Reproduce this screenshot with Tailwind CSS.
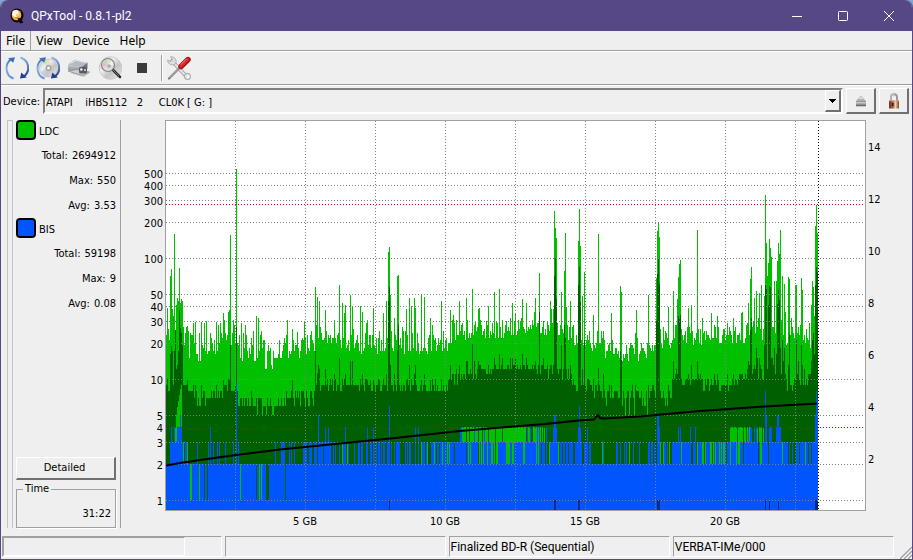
<!DOCTYPE html>
<html lang="en">
<head>
<meta charset="utf-8">
<title>QPxTool - 0.8.1-pl2</title>
<script src="https://cdn.jsdelivr.net/npm/@tailwindcss/browser@4"></script>
</head>
<body class="bg-[#7fa6cf]">
<svg class="absolute h-0 w-0" aria-hidden="true">
  <defs>
    <linearGradient id="blueUp" x1="0" y1="0" x2="0" y2="1"><stop offset="0" stop-color="#3c74bb"/><stop offset=".5" stop-color="#86b2e4"/><stop offset="1" stop-color="#5d8fcf"/></linearGradient>
    <linearGradient id="blueDown" x1="0" y1="0" x2="0" y2="1"><stop offset="0" stop-color="#8fb6e6"/><stop offset="1" stop-color="#213f8c"/></linearGradient>
    <linearGradient id="disc" x1="0" y1="0" x2="1" y2="1"><stop offset="0" stop-color="#b9b9b9"/><stop offset=".35" stop-color="#f1f1f1"/><stop offset=".6" stop-color="#c4c4c4"/><stop offset="1" stop-color="#ececec"/></linearGradient>
    <linearGradient id="metal" x1="0" y1="0" x2="0" y2="1"><stop offset="0" stop-color="#c9ced6"/><stop offset="1" stop-color="#6f757d"/></linearGradient>
    <linearGradient id="brass" x1="0" y1="0" x2="1" y2="0"><stop offset="0" stop-color="#6e2f1a"/><stop offset=".4" stop-color="#a8623f"/><stop offset=".65" stop-color="#f0cfae"/><stop offset="1" stop-color="#7c4026"/></linearGradient>
    <g id="arrows">
      <path d="M8.500 22.500C0 19.500-.5 8 6 3.500" fill="none" stroke="url(#blueUp)" stroke-width="2"/>
      <path d="M3 2.200L10 1.200L8.200 6.800z" fill="#3a70b8"/>
      <path d="M15.500 1.500C24.500 4.500 25.500 15.500 19 20.500" fill="none" stroke="url(#blueDown)" stroke-width="2.200"/>
      <path d="M15 22.500L16.300 16.500L21.800 21.500z" fill="#213f8c"/>
    </g>
  </defs>
</svg>
<div class="flex min-h-screen flex-col overflow-hidden rounded-t-lg border-x border-b border-[#564787] bg-[#efefef] font-['DejaVu_Sans_Condensed','Noto_Sans',sans-serif] text-[11px] text-black">

  <header class="flex h-[31px] items-center bg-[#564787] pl-2 font-['Roboto',sans-serif] text-xs text-white">
    <svg class="mr-1.5 h-4 w-4" viewBox="0 0 16 16">
      <ellipse cx="8" cy="7.500" rx="6.500" ry="7" fill="#0b0704"/>
      <ellipse cx="7.500" cy="7" rx="4.800" ry="5.300" fill="#f6b34a"/>
      <ellipse cx="6.500" cy="5.500" rx="3.200" ry="3.400" fill="#fff6df"/>
      <path d="M5 10L9.500 8.500L11 12z" fill="#e98b2b"/>
      <circle cx="8" cy="7" r=".8" fill="#b98a4a"/>
      <path d="M8.500 10.500L11 10L14.500 14.500L11 15.500z" fill="#0b0704"/>
    </svg>
    <h1>QPxTool - 0.8.1-pl2</h1>
    <div class="ml-auto flex">
      <button class="flex h-[31px] w-[46px] items-center justify-center" aria-label="Minimize"><svg class="h-3 w-3" viewBox="0 0 12 12"><path d="M1 6.500H11" stroke="#fff"/></svg></button>
      <button class="flex h-[31px] w-[46px] items-center justify-center" aria-label="Maximize"><svg class="h-3 w-3" viewBox="0 0 12 12"><rect x="1.500" y="1.500" width="9" height="9" rx=".8" fill="none" stroke="#fff"/></svg></button>
      <button class="flex h-[31px] w-[46px] items-center justify-center" aria-label="Close"><svg class="h-3 w-3" viewBox="0 0 12 12"><path d="M1 1L11 11M11 1L1 11" stroke="#fff"/></svg></button>
    </div>
  </header>

  <nav class="flex h-5 border-b border-[#a0a0a0] font-['Noto_Sans',sans-serif] text-xs leading-[20px]">
    <button class="border-r border-[#a0a0a0] px-[5px]">File</button>
    <button class="px-[5px]">View</button>
    <button class="px-[5px]">Device</button>
    <button class="px-[5px]">Help</button>
  </nav>

  <div class="flex h-[34px] items-center border-b border-t border-b-[#a0a0a0] border-t-white pl-1">
    <button class="flex h-7 w-[31px] items-center" aria-label="Refresh"><svg class="h-6 w-6" viewBox="0 0 24 24"><use href="#arrows"/></svg></button>
    <button class="flex h-7 w-[31px] items-center" aria-label="Reload media"><svg class="h-6 w-6" viewBox="0 0 24 24">
      <circle cx="12.500" cy="12" r="9" fill="url(#disc)" stroke="#b5b5b5" stroke-width=".6"/>
      <path d="M12.500 12L7 5.500L10.500 3.500z" fill="#c9e5b0"/><path d="M12.500 12L11 3.500L14 3.500z" fill="#f0d8b0"/><path d="M12.500 12L5 16L8 19.500z" fill="#c5cfe0"/>
      <circle cx="12.500" cy="12" r="3" fill="#a5a5a5"/><circle cx="12.500" cy="12" r="1.500" fill="#f6f6f6"/>
      <use href="#arrows"/></svg></button>
    <button class="flex h-7 w-[31px] items-center" aria-label="Drive"><svg class="h-6 w-6" viewBox="0 0 24 24">
      <path d="M3 17L17 21L24 16L12 12z" fill="#c6c6c6"/>
      <path d="M1 8.500L8 3.500L20.500 6.500L14 11.500z" fill="#b4bac2"/><path d="M1 8.500L14 11.500V18L1 14z" fill="url(#metal)"/><path d="M14 11.500L20.500 6.500V12.500L14 18z" fill="#70757c"/>
      <path d="M4 7.500L9 4.200L19 6.700" fill="none" stroke="#e6eaee"/>
      <path d="M1 15L10 13.500L22 16L15 19.500z" fill="#cfcfcf" stroke="#8a8a8a" stroke-width=".7"/>
      <rect x="12" y="11" width="8" height="6.500" rx="1.500" fill="#565c64"/><circle cx="14.300" cy="13.500" r="1.300" fill="#eee"/><circle cx="18" cy="14" r="1" fill="#ddd"/></svg></button>
    <button class="flex h-7 w-[31px] items-center" aria-label="Scan"><svg class="h-6 w-6" viewBox="0 0 24 24">
      <circle cx="12.500" cy="12" r="11.300" fill="url(#disc)" stroke="#c2c2c2" stroke-width=".7"/>
      <circle cx="10" cy="9" r="6.500" fill="#dcdcdc" stroke="#848484" stroke-width="1.200"/>
      <path d="M9 9L5 5L9 3.500z" fill="#b6df9e"/><path d="M9 9L4.500 11L4.500 6z" fill="#e6b9c9"/><path d="M10 9L14 5L15.500 9z" fill="#f4f4f4"/>
      <circle cx="11" cy="10" r="1.800" fill="#ababab"/>
      <path d="M15.500 14.500L22 21" stroke="#2b2b2b" stroke-width="2.600" stroke-linecap="round"/><path d="M15 14L21 20" stroke="#8a8a8a" stroke-width=".8"/></svg></button>
    <button class="flex h-7 w-[26px] items-center justify-center" aria-label="Stop"><svg class="h-3 w-3" viewBox="0 0 12 12"><rect x="1" y="1" width="10" height="10" fill="#3b3b3b"/></svg></button>
    <div class="ml-[6px] mr-1 h-[26px] w-0.5 border-l border-r border-l-[#a0a0a0] border-r-white"></div>
    <button class="flex h-7 w-7 items-center" aria-label="Preferences"><svg class="h-6 w-6" viewBox="0 0 24 24">
      <path d="M5 5L20 21" stroke="#8d8d8d" stroke-width="3.600" stroke-linecap="round"/><path d="M5 5L20 21" stroke="#e4e4e4" stroke-width="2.400" stroke-linecap="round"/>
      <path d="M3.500.8A4.800 4.800 0 0 1 8.800 7.500A4.800 4.800 0 0 1 .6 4L4 5.500L5.500 3.500z" fill="#dedede" stroke="#999" stroke-width=".7"/>
      <circle cx="20.500" cy="20.500" r="3.200" fill="#e2e2e2" stroke="#929292" stroke-width=".8"/><circle cx="21" cy="21" r="1.200" fill="#fafafa"/>
      <path d="M2 22.500L12.500 12" stroke="#777" stroke-width="2.200" stroke-linecap="round"/><path d="M2.500 22L12.500 12" stroke="#cfcfcf" stroke-width=".8"/>
      <path d="M14 10.500L21 3.500" stroke="#9e1212" stroke-width="5.400" stroke-linecap="round"/><path d="M14 10L20.500 3.500" stroke="#dc2828" stroke-width="3.600" stroke-linecap="round"/><path d="M14 8.500L19.500 3" stroke="#f48a8a" stroke-width=".9"/></svg></button>
  </div>

  <div class="flex items-center border-t border-white pb-1.5 pl-0.5 pr-[3px] pt-0.5">
    <label for="device" class="w-10 whitespace-nowrap pt-0.5">Device:</label>
    <div class="relative flex-1">
      <select id="device" class="block h-[26px] w-full appearance-none whitespace-pre rounded-none border-2 border-b-white border-l-[#808080] border-r-white border-t-[#808080] bg-[#efefef] pl-px pt-1 text-[11px]">
        <option>ATAPI&nbsp;&nbsp;&nbsp; iHBS112&nbsp;&nbsp; 2&nbsp;&nbsp;&nbsp;&nbsp; CL0K [ G: ]</option>
      </select>
      <span class="pointer-events-none absolute bottom-0.5 right-0.5 top-0.5 flex w-4 items-center justify-center border-b-2 border-l border-r-2 border-t border-b-[#707070] border-l-white border-r-[#707070] border-t-white bg-[#efefef]"><svg class="h-1 w-[7px]" viewBox="0 0 7 4" shape-rendering="crispEdges"><path d="M0 0H7V1H6V2H5V3H4V4H3V3H2V2H1V1H0z"/></svg></span>
    </div>
    <button class="ml-[3px] flex h-[26px] w-[30px] items-center justify-center border border-b-2 border-r-2 border-b-[#707070] border-l-white border-r-[#707070] border-t-white" aria-label="Eject"><svg class="h-4 w-4" viewBox="0 0 16 16"><path d="M8 2.500L13 8H3z" fill="#b0b0b0"/><path d="M8 3.500L11 6H5z" fill="#dcdcdc"/><rect x="3" y="8" width="10" height="1.500" fill="#999"/><rect x="3" y="10.500" width="10" height="2.800" fill="#6c6c6c"/><rect x="3" y="10.500" width="10" height="1" fill="#b0b0b0"/></svg></button>
    <button class="ml-[3px] flex h-[26px] w-[30px] items-center justify-center border border-b-2 border-r-2 border-b-[#707070] border-l-white border-r-[#707070] border-t-white" aria-label="Lock"><svg class="h-4 w-4" viewBox="0 0 16 16"><path d="M5 8V4Q5 1.200 8 1.200T11 4V8" fill="none" stroke="#999" stroke-width="2"/><path d="M5 8V4Q5 1.200 8 1.200" fill="none" stroke="#d8d8d8" stroke-width=".8"/><rect x="3" y="7.500" width="10" height="8" rx=".6" fill="url(#brass)"/><path d="M3.500 8H12.500" stroke="#e0ac88" stroke-width=".8"/><rect x="6" y="10" width="1.500" height="3" fill="#3c1c0e"/></svg></button>
  </div>

  <main class="flex flex-1 pl-1.5">
    <div class="w-1.5 border-x border-t border-[#c4c4c4]"></div>
    <aside class="flex w-[108px] flex-col border-r border-[#a0a0a0] pl-[3px] pr-1">
      <div class="flex h-5 items-center gap-[3px]"><button id="ldc" class="h-5 w-5 rounded-sm border-2 border-black bg-[#00c000]" aria-label="LDC colour"></button><label for="ldc" class="pt-1">LDC</label></div>
      <dl class="pt-[3px] text-right leading-[25px]">
        <div class="flex justify-end gap-1"><dt>Total:</dt><dd>2694912</dd></div>
        <div class="flex justify-end gap-1"><dt>Max:</dt><dd>550</dd></div>
        <div class="flex justify-end gap-1"><dt>Avg:</dt><dd>3.53</dd></div>
      </dl>
      <div class="flex h-5 items-center gap-[3px]"><button id="bis" class="h-5 w-5 rounded-sm border-2 border-black bg-[#0055ff]" aria-label="BIS colour"></button><label for="bis" class="pt-1">BIS</label></div>
      <dl class="pt-[3px] text-right leading-[25px]">
        <div class="flex justify-end gap-1"><dt>Total:</dt><dd>59198</dd></div>
        <div class="flex justify-end gap-1"><dt>Max:</dt><dd>9</dd></div>
        <div class="flex justify-end gap-1"><dt>Avg:</dt><dd>0.08</dd></div>
      </dl>
      <button class="mt-auto h-[23px] border border-b-2 border-r-2 border-b-[#707070] border-l-white border-r-[#707070] border-t-white pr-0.5 pt-px">Detailed</button>
      <fieldset class="mt-[3px] border border-[#a0a0a0] px-1 pb-[5px] shadow-[1px_1px_0_#fff]">
        <legend class="ml-0.5 px-0.5 leading-3">Time</legend>
        <p class="pt-[11px] text-right leading-4">31:22</p>
      </fieldset>
    </aside>

    <section class="flex flex-1" aria-label="Error rate chart">
      <div id="errors" class="relative mb-[17px] w-11"></div>
      <div class="flex flex-1 flex-col">
        <div class="flex flex-1 flex-col border border-[#a0a0a0] bg-white">
          <svg id="chart" class="block h-[389px] w-full flex-1" viewBox="166 121 699 389" preserveAspectRatio="none" shape-rendering="crispEdges"></svg>
        </div>
        <div id="capacity" class="relative h-[17px]"></div>
      </div>
      <div id="speeds" class="relative mb-[17px] w-[46px]"></div>
    </section>
  </main>

  <footer class="mt-2 flex h-[23px] gap-[3px] pb-0.5 pl-px pr-[18px] font-['Roboto',sans-serif] text-xs">
    <div class="flex-1 border border-b-white border-l-[#a0a0a0] border-r-white border-t-[#a0a0a0]"><div class="h-full w-5/6 border border-b-white border-l-[#a0a0a0] border-r-white border-t-[#a0a0a0]"></div></div>
    <div class="flex-1 border border-b-white border-l-[#a0a0a0] border-r-white border-t-[#a0a0a0]"></div>
    <div class="flex-1 whitespace-nowrap border border-b-white border-l-[#a0a0a0] border-r-white border-t-[#a0a0a0] pl-px leading-[21px]">Finalized BD-R (Sequential)</div>
    <div class="flex-1 whitespace-nowrap border border-b-white border-l-[#a0a0a0] border-r-white border-t-[#a0a0a0] pl-px leading-[21px]">VERBAT-IMe/000</div>
  </footer>
  <svg class="absolute bottom-px right-px h-3 w-3" viewBox="0 0 12 12"><path d="M0 12L12 0M4 12L12 4M8 12L12 8" stroke="#a0a0a0" stroke-width="1.400"/><path d="M2 12L12 2M6 12L12 6M10 12L12 10" stroke="#fff"/></svg>
</div>

<script>
const LIGHT = '#00c000', DARK = '#006000', BLUE = '#0055ff', NAVY = '#002a80';
const LEFT = 166, END = 818, TOP = 121, BOTTOM = 510;
const level = v => Math.round(500 - 121 * Math.log10(v));
let seed = 77;
const rnd = () => (seed = (seed * 1103515245 + 12345) % 2147483648) / 2147483648;

// Typical per-column values: [until x, LDC max low, high, LDC avg low, high, share of BIS 3, share of light stripes, stripe level]
const bands = [
  [170,20,27,8,9,.2,0,3],[183,22,36,9,16,.6,.3,3],[188,18,30,8,10,.4,.5,3],[205,14,27,6,8,.06,0,3],[220,16,27,6,8,.1,0,3],
  [236,19,32,7,9,.2,0,3],[265,14,26,5,7,.1,0,3],[278,11,19,5,6,.1,0,3],[290,15,22,6,7,.2,0,3],[308,15,23,6,8,.3,0,3],
  [316,17,26,6,8,.6,0,3],[330,19,28,8,10,.75,.2,3],[360,17,27,8,9,.6,.2,3],[385,16,24,8,9,.5,.15,3],[400,17,26,8,10,.5,.1,3],
  [430,16,27,8,9,.5,.2,3],[448,17,25,8,9,.7,.5,3],[460,20,30,9,11,.7,.5,3],[480,21,30,10,12,.6,.7,4],[505,22,31,11,13,.6,.8,4],
  [530,23,32,12,13,.65,.9,4],[548,23,32,11,13,.65,.5,4],[572,21,30,10,12,.7,.4,3],[590,19,28,8,10,.6,.2,3],[604,17,26,7,9,.35,.1,3],
  [622,15,24,6,8,.25,.05,3],[648,14,20,5,8,.2,.05,3],[656,17,23,7,9,.4,.1,3],[672,18,26,6,8,.4,.3,3],[690,20,28,9,10,.65,.4,3],
  [702,19,27,9,11,.5,.3,3],[730,20,27,8,10,.55,.6,3],[746,20,29,9,11,.65,.7,4],[764,21,33,10,13,.75,.6,4],[786,22,40,10,16,.8,.4,3],
  [812,18,34,8,12,.5,.1,3],[819,30,60,12,24,1,0,3]
];

// Peaks as [x, top]
const ldcMax = [[167,308],[170,276],[171,269],[172,309],[174,234],[176,305],[177,298],[178,301],[179,268],[180,303],[181,299],[182,301],[187,326],[195,322],[201,322],[216,322],[223,313],[224,320],[228,312],[229,310],[230,235],[236,169],[241,323],[245,325],[256,316],[261,331],[287,320],[297,332],[304,322],[315,287],[317,297],[319,301],[325,310],[334,320],[339,285],[342,303],[345,305],[350,295],[352,307],[360,306],[362,312],[367,320],[373,308],[383,313],[386,301],[388,252],[389,247],[390,295],[397,276],[398,275],[406,309],[409,298],[411,306],[414,298],[415,308],[421,294],[424,297],[430,318],[441,301],[450,310],[453,315],[459,301],[466,298],[472,289],[479,308],[488,306],[494,292],[499,289],[512,303],[522,299],[526,303],[535,298],[539,273],[550,301],[554,211],[555,228],[556,238],[561,292],[564,271],[565,233],[570,301],[578,241],[579,209],[580,246],[582,296],[584,272],[593,315],[598,234],[611,313],[620,286],[621,292],[636,310],[648,295],[656,278],[657,231],[658,222],[659,237],[668,307],[673,291],[677,299],[678,277],[679,264],[680,260],[688,308],[691,305],[697,230],[702,318],[711,313],[717,316],[727,323],[742,312],[748,303],[750,279],[751,267],[754,298],[756,291],[759,293],[761,285],[764,296],[765,195],[766,243],[767,276],[768,263],[769,239],[770,248],[771,257],[774,281],[776,281],[777,261],[778,243],[779,254],[780,230],[782,276],[784,284],[788,277],[789,279],[795,285],[796,285],[801,278],[802,290],[811,305],[812,281],[813,287],[815,226],[816,205],[817,233]];
const ldcAvg = [[171,346],[175,330],[179,310],[180,328],[181,333],[182,345],[230,345],[236,327],[315,351],[318,365],[339,358],[350,361],[352,361],[362,374],[388,301],[389,287],[390,365],[397,350],[398,325],[409,365],[415,365],[459,365],[466,361],[472,343],[494,358],[499,354],[522,354],[539,312],[554,276],[555,258],[556,299],[561,345],[564,325],[565,338],[578,285],[579,267],[580,302],[584,340],[598,368],[620,351],[621,360],[656,321],[657,274],[658,259],[659,284],[673,361],[678,316],[679,319],[680,315],[697,361],[750,330],[751,318],[756,348],[765,285],[766,289],[768,305],[769,286],[770,287],[774,348],[777,304],[778,290],[779,300],[782,340],[789,334],[796,340],[801,345],[812,340],[815,285],[816,267],[817,272]];
const bis = [[171,427],[174,427],[177,427],[178,427],[179,427],[180,415],[181,427],[208,442],[210,427],[219,442],[236,384],[318,415],[325,427],[328,427],[345,427],[367,427],[373,427],[389,406],[415,427],[418,427],[460,427],[461,427],[474,427],[484,427],[527,427],[530,427],[537,427],[539,427],[546,427],[553,427],[554,415],[555,415],[556,427],[578,427],[579,406],[580,427],[587,427],[657,415],[658,415],[659,427],[678,427],[680,427],[690,427],[695,427],[748,427],[750,427],[751,427],[754,427],[756,427],[765,391],[766,415],[769,427],[770,427],[771,427],[776,427],[777,415],[778,415],[779,427],[780,427],[815,415],[816,391],[817,400]];
const slope = [[175,427],[176,415],[177,407],[178,401],[179,395],[180,389],[181,385]];
const holes = [[190,LIGHT],[191,LIGHT],[199,LIGHT],[204,DARK],[207,DARK],[240,LIGHT],[256,DARK],[259,LIGHT],[261,LIGHT],[266,DARK],[267,DARK],[268,DARK],[285,DARK]];
const marks = [389,554,555,578,579,657,658,659,765,769,778,815,816,817];

const paths = [];
const layer = color => { const l = { color, d: '' }; paths.push(l); return l; };
const bar = (l, x, y, to = BOTTOM) => { l.d += `M${x} ${y}h1V${to}h-1z`; };
const max = layer(LIGHT), avg = layer(DARK), stripe = layer(LIGHT), low = layer(BLUE), holeL = layer(LIGHT), holeD = layer(DARK), navy = layer(NAVY);
const maxTop = new Map(ldcMax), avgTop = new Map(ldcAvg), bisTop = new Map(bis), slopeTop = new Map(slope);
for (let x = LEFT; x < END; x++) {
  const [, a, b, c, e, share, light, lvl] = bands.find(s => x < s[0]);
  const r = rnd(), q = rnd(), burst = rnd() < .12 ? 1.3 : 1;
  const raised = burst > 1 || maxTop.has(x) ? 1.2 : 1;
  bar(max, x, maxTop.get(x) ?? level(Math.round((a + (b - a) * r * Math.sqrt(r)) * burst)));
  bar(avg, x, avgTop.get(x) ?? level(Math.round((c + (e - c) * q) * raised)));
  if (slopeTop.has(x)) bar(stripe, x, slopeTop.get(x));
  else if (rnd() < light) bar(stripe, x, level(lvl));
  bar(low, x, bisTop.get(x) ?? level(rnd() < share ? 3 : 2));
}
holes.forEach(([x, c]) => bar(c === LIGHT ? holeL : holeD, x, 464, 500));
marks.forEach(x => bar(navy, x, 500));

let out = paths.map(p => `<path fill="${p.color}" d="${p.d}"/>`).join('');
const dots = (d, color) => `<path d="${d}" fill="none" stroke="${color}" stroke-dasharray="1 2"/>`;
for (const v of [1,2,3,5,10,20,30,40,50,100,200,300,400,500]) out += dots(`M${LEFT} ${level(v) + .5}H865`, '#808080');
for (let x = 235; x < 800; x += 70) out += dots(`M${x + .5} ${TOP}V${BOTTOM}`, '#808080');
out += dots('M166 427.5H865', '#e00000') + dots('M166 204.5H865', '#e00000') + dots('M818.5 121V510', '#000');
out += '<path shape-rendering="auto" fill="none" stroke="#000" stroke-width="2" d="M166 465.500L180 463L200 460L236 455L280 449.500L340 443.500L390 438.500L460 431L520 426L545 424L579 420.500L594 419.500L596 417L598 415L600 418L603 418.500L640 416.500L700 411L765 406.500L817 403.500"/>';
document.getElementById('chart').innerHTML = out;

const label = (box, text, cls, style) => {
  const s = document.createElement('span');
  s.textContent = text; s.className = cls; s.style.cssText = style;
  document.getElementById(box).append(s);
};
const pct = y => (y - 120) / 391 * 100 + '%';
for (const v of [1,2,3,4,5,10,20,30,40,50,100,200,300,400,500])
  label('errors', v, 'absolute right-0.5 -translate-y-1/2 leading-3', `top:${pct(level(v) + 2)}`);
for (let s = 2; s <= 14; s += 2)
  label('speeds', s, 'absolute left-0.5 -translate-y-1/2 leading-3', `top:${pct(512 - s * 26)}`);
for (let g = 5; g <= 20; g += 5)
  label('capacity', g + ' GB', 'absolute top-[5px] -translate-x-1/2 whitespace-nowrap leading-3', `left:${(g * 28) / 701 * 100}%`);
</script>
</body>
</html>
